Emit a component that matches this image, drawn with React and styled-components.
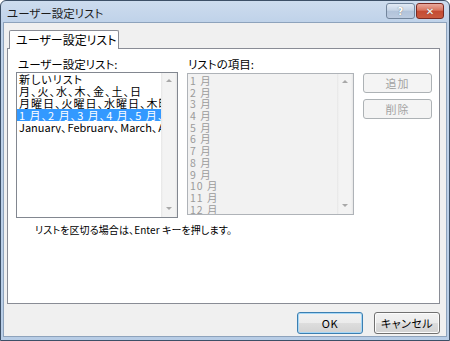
import React from "react";
import styled, { createGlobalStyle } from "styled-components";

const Global = createGlobalStyle`
  html, body { margin: 0; padding: 0; background: #fff; }
  body {
    font-family: "Noto Sans CJK JP", "Liberation Sans", sans-serif;
    font-size: 11px;
    color: #000;
    font-feature-settings: "palt";
  }
  * { box-sizing: border-box; }
`;

const Window = styled.div`
  width: 450px;
  height: 341px;
  border: 1px solid #3d5067;
  border-radius: 6px 6px 0 0;
  background: linear-gradient(#cddcee 0px, #bfd2e9 22px, #b8cde6 100%);
  display: flex;
  flex-direction: column;
  padding: 0 2px 3px 2px;
  overflow: hidden;
`;

const TitleBar = styled.div`
  height: 21px;
  display: flex;
  align-items: center;
  padding-left: 4px;
  padding-right: 3px;
`;

const Title = styled.div`
  flex: 1;
  font-size: 11.5px;
  line-height: 14px;
  color: #1b1b1b;
  margin-top: 2px;
`;

const CaptionButton = styled.div`
  width: ${(p) => p.$w}px;
  height: 16px;
  margin-top: -1px;
  margin-left: 1px;
  border: 1px solid ${(p) => (p.$close ? "#7a2a22" : "#72859c")};
  border-radius: 3px;
  background: ${(p) =>
    p.$close
      ? "linear-gradient(#e9a99d 0%, #d8755f 45%, #c44a32 50%, #c95a3f 100%)"
      : "linear-gradient(#e1eaf5 0%, #c7d5e6 45%, #b1c3da 50%, #bccbe0 100%)"};
  display: flex;
  align-items: center;
  justify-content: center;
  color: #fff;
  font-family: "DejaVu Sans", sans-serif;
  font-weight: bold;
  font-size: 10px;
  text-shadow: 0 0 1px #555;
`;

const Client = styled.div`
  flex: 1;
  background: #f0f0f0;
  border: 1px solid #8ea3bc;
  display: flex;
  flex-direction: column;
  padding: 7px 6px 0 3px;
`;

const TabStrip = styled.div`
  display: flex;
  padding-left: 2px;
  height: 18px;
  position: relative;
  z-index: 1;
`;

const Tab = styled.div`
  width: 110px;
  height: 19px;
  background: #fff;
  border: 1px solid #898c95;
  border-bottom: none;
  border-radius: 2px 2px 0 0;
  padding-left: 6px;
  line-height: 17px;
  font-size: 12px;
`;

const Panel = styled.div`
  height: 256px;
  background: #fff;
  border: 1px solid #898c95;
  padding: 8px 0 0 8px;
  display: flex;
  flex-direction: column;
`;

const Columns = styled.div`
  display: flex;
  align-items: flex-start;
`;

const Column = styled.div`
  display: flex;
  flex-direction: column;
  width: ${(p) => p.$w}px;
  margin-left: ${(p) => p.$ml || 0}px;
`;

const Label = styled.div`
  height: 15px;
  line-height: 14px;
  font-size: 11.5px;
  padding-left: ${(p) => p.$indent || 0}px;
  color: #000;
  white-space: nowrap;
`;

const ListBox = styled.div`
  height: ${(p) => p.$h}px;
  margin-top: ${(p) => p.$mt || 0}px;
  border: 1px solid ${(p) => (p.$disabled ? "#afb3b8" : "#828790")};
  background: ${(p) => (p.$disabled ? "#f2f2f2" : "#fff")};
  display: flex;
  overflow: hidden;
`;

const Items = styled.div`
  flex: 1;
  min-width: 0;
  overflow: hidden;
  padding-top: ${(p) => p.$pt || 0}px;
`;

const Item = styled.div`
  height: ${(p) => p.$lh}px;
  line-height: ${(p) => p.$lh}px;
  white-space: nowrap;
  overflow: hidden;
  padding-left: 2px;
  font-size: ${(p) => p.$fs || 11}px;
  letter-spacing: 1px;
  background: ${(p) => (p.$selected ? "#3399ff" : "transparent")};
  color: ${(p) => (p.$selected ? "#fff" : p.$disabled ? "#9b9b9b" : "#000")};
`;

const Latin = styled.span`
  letter-spacing: 0;
`;

const ScrollBar = styled.div`
  width: 16px;
  flex: none;
  background: linear-gradient(90deg, #e6e6e6 0px, #f3f3f3 2px, #f3f3f3 14px, #e6e6e6 16px);
  display: flex;
  flex-direction: column;
  justify-content: space-between;
  align-items: center;
  padding: 6px 0 7px;
`;

const Arrow = styled.div`
  width: 0;
  height: 0;
  border-left: 3px solid transparent;
  border-right: 3px solid transparent;
  ${(p) =>
    p.$down
      ? "border-top: 3px solid #a8a8a8;"
      : "border-bottom: 3px solid #a8a8a8;"}
`;

const SideButton = styled.div`
  width: 69px;
  height: 20px;
  margin-top: ${(p) => p.$mt}px;
  border: 1px solid #adb2b5;
  border-radius: 3px;
  background: #f4f4f4;
  color: #a3a3a3;
  font-size: 11px;
  letter-spacing: 1px;
  display: flex;
  align-items: center;
  justify-content: center;
`;

const Note = styled.div`
  margin-top: 5px;
  padding-left: 19px;
  font-size: 10px;
  letter-spacing: 0.1px;
  line-height: 14px;
  color: #000;
`;

const Footer = styled.div`
  display: flex;
  justify-content: flex-end;
  gap: 11px;
  padding-top: 8px;
`;

const DialogButton = styled.div`
  width: ${(p) => p.$w}px;
  height: 22px;
  border: 1px solid ${(p) => (p.$default ? "#3c7fb1" : "#707070")};
  border-radius: 3px;
  background: linear-gradient(#f2f2f2 0%, #ebebeb 50%, #dddddd 51%, #d2d2d2 100%);
  box-shadow: ${(p) => (p.$default ? "inset 0 0 0 1px #a6d7f6" : "inset 0 0 0 1px #fcfcfc")};
  display: flex;
  align-items: center;
  justify-content: center;
  font-size: 11px;
  letter-spacing: 0.5px;
  color: #000;
`;

const leftItems = [
  "新しいリスト",
  "月、火、水、木、金、土、日",
  "月曜日、火曜日、水曜日、木曜日、金曜日、土曜日、日曜日",
  "1 月、2 月、3 月、4 月、5 月、6 月、7 月、8 月、9 月、10 月、11 月、12 月",
  "January、February、March、April、May、June、July",
];

const rightItems = Array.from({ length: 12 }, (_, i) => `${i + 1} 月`);

function ItemText({ text }) {
  return text
    .split(/([A-Za-z]+)/)
    .map((part, i) =>
      /^[A-Za-z]+$/.test(part) ? <Latin key={i}>{part}</Latin> : part
    );
}

export default function App() {
  return (
    <>
      <Global />
      <Window>
        <TitleBar>
          <Title>ユーザー設定リスト</Title>
          <CaptionButton $w={29}>?</CaptionButton>
          <CaptionButton $w={28} $close>✕</CaptionButton>
        </TitleBar>
        <Client>
          <TabStrip>
            <Tab>ユーザー設定リスト</Tab>
          </TabStrip>
          <Panel>
            <Columns>
              <Column $w={162}>
                <Label $indent={2}>ユーザー設定リスト:</Label>
                <ListBox $h={146}>
                  <Items>
                    {leftItems.map((t, i) => (
                      <Item key={i} $lh={12} $selected={i === 3}>
                        <ItemText text={t} />
                      </Item>
                    ))}
                  </Items>
                  <ScrollBar>
                    <Arrow />
                    <Arrow $down />
                  </ScrollBar>
                </ListBox>
              </Column>
              <Column $w={167} $ml={9}>
                <Label $indent={1}>リストの項目:</Label>
                <ListBox $h={142} $mt={1} $disabled>
                  <Items $pt={1}>
                    {rightItems.map((t, i) => (
                      <Item key={i} $lh={11.7} $fs={10.5} $disabled>
                        {t}
                      </Item>
                    ))}
                  </Items>
                  <ScrollBar>
                    <Arrow />
                    <Arrow $down />
                  </ScrollBar>
                </ListBox>
              </Column>
              <Column $w={69} $ml={9}>
                <SideButton $mt={16}>追加</SideButton>
                <SideButton $mt={6}>削除</SideButton>
              </Column>
            </Columns>
            <Note>リストを区切る場合は、Enter キーを押します。</Note>
          </Panel>
          <Footer>
            <DialogButton $w={66} $default>OK</DialogButton>
            <DialogButton $w={66}>キャンセル</DialogButton>
          </Footer>
        </Client>
      </Window>
    </>
  );
}
